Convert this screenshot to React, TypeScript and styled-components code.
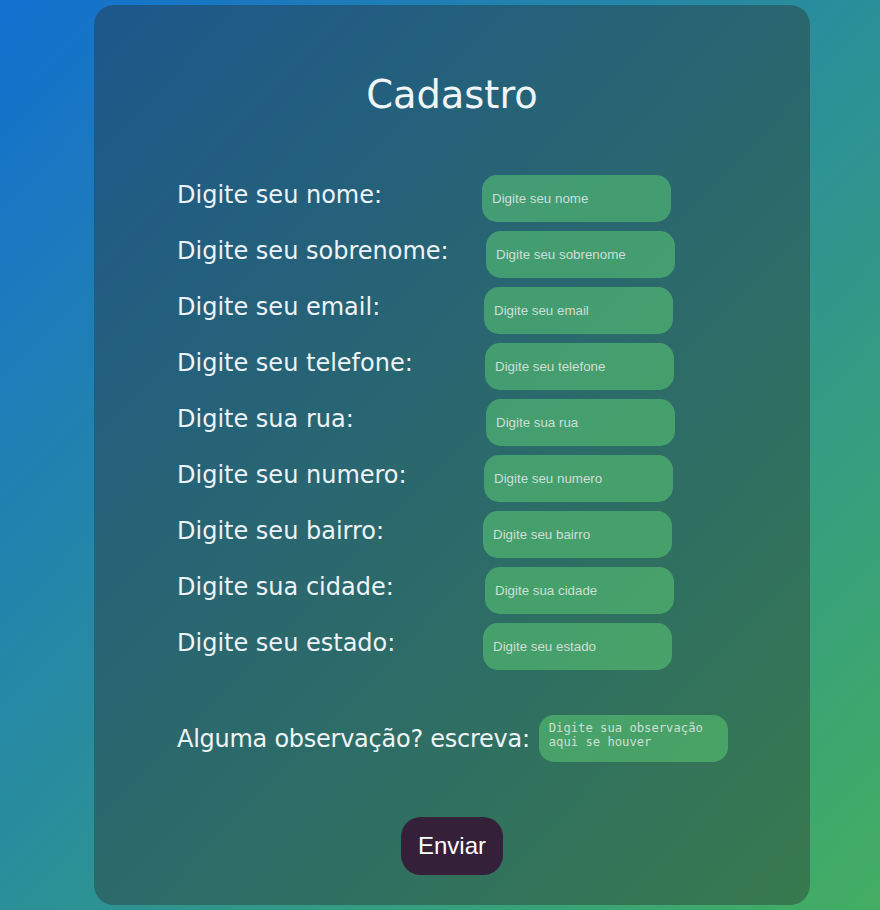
import React from 'react';
import styled, { createGlobalStyle } from 'styled-components';

type Field = {
  id: string;
  label: string;
  placeholder: string;
  shift: number;
};

const fields: Field[] = [
  { id: 'nome', label: 'Digite seu nome:', placeholder: 'Digite seu nome', shift: 0 },
  { id: 'sobrenome', label: 'Digite seu sobrenome:', placeholder: 'Digite seu sobrenome', shift: 4 },
  { id: 'email', label: 'Digite seu email:', placeholder: 'Digite seu email', shift: 2 },
  { id: 'telefone', label: 'Digite seu telefone:', placeholder: 'Digite seu telefone', shift: 3 },
  { id: 'rua', label: 'Digite sua rua:', placeholder: 'Digite sua rua', shift: 4 },
  { id: 'numero', label: 'Digite seu numero:', placeholder: 'Digite seu numero', shift: 2 },
  { id: 'bairro', label: 'Digite seu bairro:', placeholder: 'Digite seu bairro', shift: 1 },
  { id: 'cidade', label: 'Digite sua cidade:', placeholder: 'Digite sua cidade', shift: 3 },
  { id: 'estado', label: 'Digite seu estado:', placeholder: 'Digite seu estado', shift: 1 }
];

const GlobalStyle = createGlobalStyle`
  html, body {
    margin: 0;
    padding: 0;
  }

  body {
    min-height: 910px;
    background: linear-gradient(to bottom right, #1370d0, #43ae62);
    font-family: 'DejaVu Sans', 'Liberation Sans', sans-serif;
  }
`;

const Page = styled.div`
  box-sizing: border-box;
  height: 910px;
  padding: 5px 70px 5px 94px;
`;

const Card = styled.div`
  box-sizing: border-box;
  width: 716px;
  height: 900px;
  padding-top: 67px;
  display: flex;
  flex-direction: column;
  background: rgba(42, 42, 40, 0.38);
  border-radius: 20px;
`;

const Title = styled.h1`
  margin: 0;
  font-family: 'DejaVu Sans', sans-serif;
  font-size: 38.4px;
  font-weight: normal;
  line-height: normal;
  color: #f0f5f8;
  text-align: center;
`;

const Form = styled.form`
  margin-top: 58px;
  display: flex;
  flex-direction: column;
`;

const Fields = styled.div`
  display: flex;
  flex-direction: column;
  gap: 9px;
`;

const Row = styled.div`
  display: flex;
  align-items: baseline;
  padding-left: 83px;
`;

const NoteRow = styled.div`
  margin-top: 45px;
  display: flex;
  align-items: center;
  gap: 9px;
  padding-left: 83px;
`;

const Label = styled.label<{ $fixed?: boolean }>`
  flex-shrink: 0;
  width: ${({ $fixed }) => ($fixed ? '305px' : 'auto')};
  font-family: 'DejaVu Sans', sans-serif;
  font-size: 24px;
  line-height: normal;
  letter-spacing: ${({ $fixed }) => ($fixed ? '0' : '-0.26px')};
  color: #eef3f7;
`;

const Input = styled.input<{ $shift: number }>`
  box-sizing: border-box;
  width: 189px;
  height: 47px;
  margin: 0 0 0 ${({ $shift }) => $shift}px;
  padding: 0 10px;
  border: none;
  border-radius: 15px;
  outline: none;
  background: rgba(90, 200, 115, 0.56);
  font-family: 'Liberation Sans', Arial, sans-serif;
  font-size: 13.33px;
  color: #f0f0f0;

  &::placeholder {
    color: rgba(238, 238, 238, 0.82);
  }
`;

const Note = styled.textarea`
  box-sizing: border-box;
  width: 189px;
  height: 47px;
  margin: 0;
  padding: 6px 10px;
  border: none;
  border-radius: 15px;
  outline: none;
  resize: none;
  overflow: hidden;
  background: rgba(90, 200, 115, 0.56);
  font-family: 'DejaVu Sans Mono', 'Liberation Mono', monospace;
  font-size: 12.2px;
  line-height: 14px;
  color: #f0f0f0;

  &::placeholder {
    color: rgba(238, 238, 238, 0.82);
  }
`;

const SubmitButton = styled.button`
  align-self: center;
  margin-top: 55px;
  padding: 15px 16.5px;
  border: none;
  border-radius: 20px;
  background: #342039;
  color: #ffffff;
  font-family: 'Liberation Sans', Arial, sans-serif;
  font-size: 24px;
  line-height: normal;
  cursor: pointer;
`;

const App: React.FC = () => {
  return (
    <>
      <GlobalStyle />
      <Page>
        <Card>
          <Title>Cadastro</Title>
          <Form onSubmit={(e) => e.preventDefault()}>
            <Fields>
              {fields.map((field) => (
                <Row key={field.id}>
                  <Label $fixed htmlFor={field.id}>{field.label}</Label>
                  <Input
                    $shift={field.shift}
                    id={field.id}
                    placeholder={field.placeholder}
                    type='text'
                  />
                </Row>
              ))}
            </Fields>
            <NoteRow>
              <Label htmlFor='obs'>Alguma observação? escreva:</Label>
              <Note id='obs' placeholder='Digite sua observação aqui se houver' />
            </NoteRow>
            <SubmitButton type='submit'>Enviar</SubmitButton>
          </Form>
        </Card>
      </Page>
    </>
  );
};

export default App;
